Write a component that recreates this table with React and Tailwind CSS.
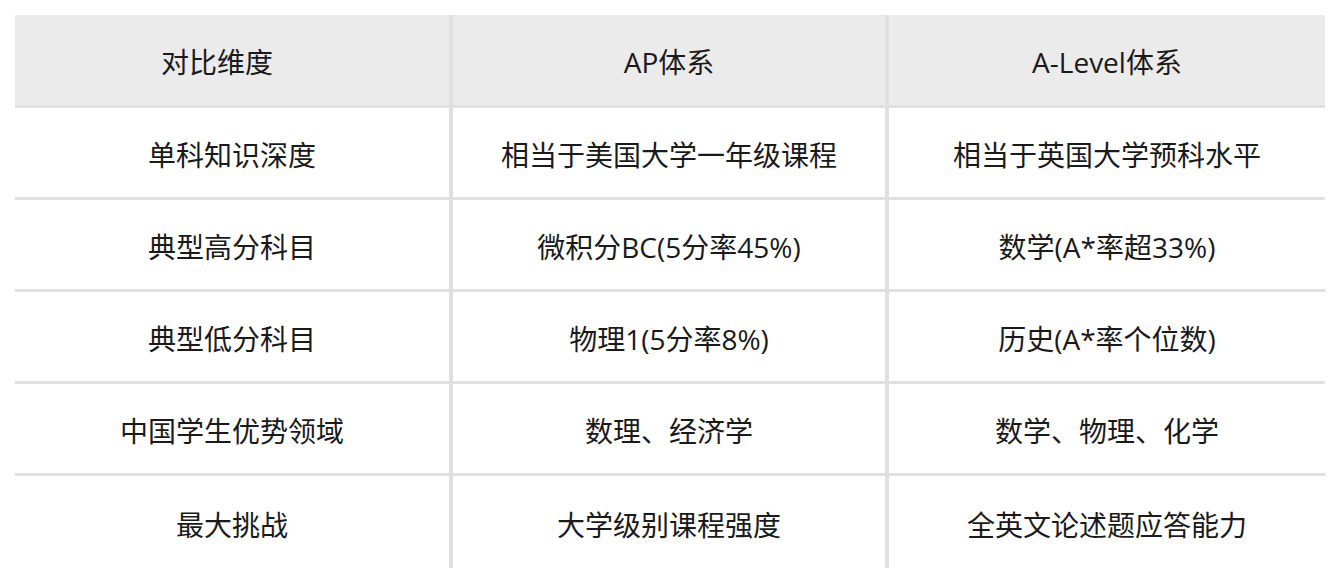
const rows = [
  ['单科知识深度', '相当于美国大学一年级课程', '相当于英国大学预科水平'],
  ['典型高分科目', '微积分BC(5分率45%)', '数学(A*率超33%)'],
  ['典型低分科目', '物理1(5分率8%)', '历史(A*率个位数)'],
  ['中国学生优势领域', '数理、经济学', '数学、物理、化学'],
  ['最大挑战', '大学级别课程强度', '全英文论述题应答能力'],
]

export default function App() {
  return (
    <div className="bg-white w-[1340px] h-[584px] pt-[15px] pl-[15px] text-[28px] text-[#1a1a1a] font-['Open_Sans','Noto_Sans_CJK_SC',sans-serif]">
      <div className="w-[1310px]">
        {/* header */}
        <div className="flex h-[93px] bg-[#ebebeb] border-b-[3px] border-[#e0e0e0]">
          <div className="w-[434px] flex items-center justify-center pt-1 pr-[30px]">对比维度</div>
          <div className="w-[436px] border-l-4 border-[#e0e0e0] flex items-center justify-center pt-1">AP体系</div>
          <div className="w-[440px] border-l-4 border-[#e0e0e0] flex items-center justify-center pt-1">A-Level体系</div>
        </div>
        {rows.map((r, i) => (
          <div
            key={i}
            className={i < rows.length - 1 ? 'flex h-[92px] border-b-[3px] border-[#e0e0e0]' : 'flex h-[92px]'}
          >
            <div className="w-[434px] flex items-center justify-center pt-[5px]">{r[0]}</div>
            <div className="w-[436px] border-l-4 border-[#e0e0e0] flex items-center justify-center pt-[5px]">{r[1]}</div>
            <div className="w-[440px] border-l-4 border-[#e0e0e0] flex items-center justify-center pt-[5px]">{r[2]}</div>
          </div>
        ))}
      </div>
    </div>
  )
}
